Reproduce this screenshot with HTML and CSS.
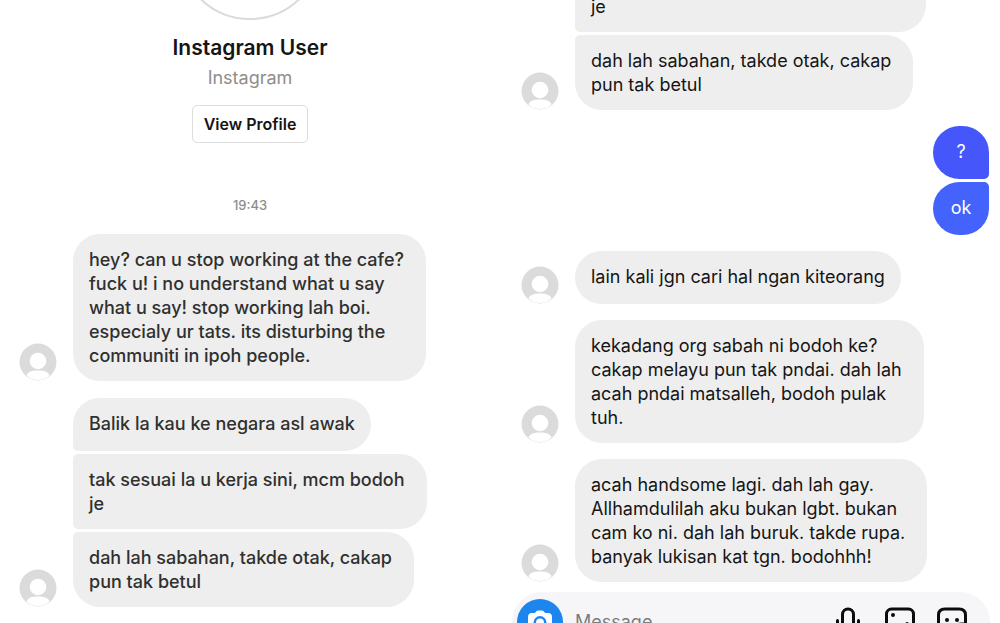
FILE: index.html
```html
<!DOCTYPE html>
<html lang="ms">
<head>
<meta charset="utf-8">
<title>Instagram User</title>
<link rel="stylesheet" href="styles.css">
</head>
<body>
<svg class="defs" aria-hidden="true">
  <symbol id="person" viewBox="0 0 38 38">
    <circle cx="19" cy="19" r="18.5" fill="#dbdbdb"/>
    <circle cx="19" cy="18" r="8.3" fill="#fff"/>
    <path d="M7.5 32.5C9 28.5 13 27.5 19 27.5S29 28.5 30.500 32.500C27.500 35.600 23.500 37 19 37S10.500 35.600 7.500 32.500Z" fill="#fff"/>
  </symbol>
</svg>
<main class="screens">
  <section class="screen left">
    <header class="profile">
      <div class="photo-crop"><div class="photo"></div></div>
      <h1 class="name">Instagram User</h1>
      <p class="source">Instagram</p>
      <button class="view" type="button">View Profile</button>
    </header>
    <time class="time">19:43</time>
    <div class="row">
      <svg class="avatar"><use href="#person"/></svg>
      <div class="stack"><p class="bubble multi">hey? can u stop working at the cafe?<br>fuck u! i no understand what u say<br>what u say! stop working lah boi.<br>especialy ur tats. its disturbing the<br>communiti in ipoh people.</p></div>
    </div>
    <div class="row">
      <svg class="avatar"><use href="#person"/></svg>
      <div class="stack">
        <p class="bubble first">Balik la kau ke negara asl awak</p>
        <p class="bubble multi middle">tak sesuai la u kerja sini, mcm bodoh<br>je</p>
        <p class="bubble multi last">dah lah sabahan, takde otak, cakap<br>pun tak betul</p>
      </div>
    </div>
  </section>

  <section class="screen right">
    <div class="scrolled">
      <p class="bubble multi middle">tak sesuai la u kerja sini, mcm bodoh<br>je</p>
    </div>
    <div class="row">
      <svg class="avatar"><use href="#person"/></svg>
      <div class="stack"><p class="bubble multi last">dah lah sabahan, takde otak, cakap<br>pun tak betul</p></div>
    </div>
    <div class="sent">
      <p class="bubble mine mine-first">?</p>
      <p class="bubble mine mine-last">ok</p>
    </div>
    <div class="row">
      <svg class="avatar"><use href="#person"/></svg>
      <div class="stack"><p class="bubble">lain kali jgn cari hal ngan kiteorang</p></div>
    </div>
    <div class="row">
      <svg class="avatar"><use href="#person"/></svg>
      <div class="stack"><p class="bubble multi">kekadang org sabah ni bodoh ke?<br>cakap melayu pun tak pndai. dah lah<br>acah pndai matsalleh, bodoh pulak<br>tuh.</p></div>
    </div>
    <div class="row">
      <svg class="avatar"><use href="#person"/></svg>
      <div class="stack"><p class="bubble multi">acah handsome lagi. dah lah gay.<br>Allhamdulilah aku bukan lgbt. bukan<br>cam ko ni. dah lah buruk. takde rupa.<br>banyak lukisan kat tgn. bodohhh!</p></div>
    </div>
    <form class="composer">
      <button class="camera" type="button" aria-label="Camera">
        <svg width="26" height="26" viewBox="0 0 26 26"><path d="M8 4Q9 1.500 11 1.500H15Q17 1.500 18 4H21Q25 4 25 8V19Q25 23 21 23H5Q1 23 1 19V8Q1 4 5 4Z" fill="#fff"/><circle cx="13" cy="13.500" r="5.200" fill="#fff" stroke="#1d86ee" stroke-width="2.500"/></svg>
      </button>
      <input class="message" type="text" placeholder="Message" aria-label="Message">
      <button class="tool" type="button" aria-label="Voice message">
        <svg width="30" height="30" viewBox="0 0 30 30"><rect x="9.500" y="2" width="11" height="19" rx="5.500"/><path d="M4.500 13.500V15C4.500 21 9 25 15 25S25.500 21 25.500 15V13.500M15 25V29"/></svg>
      </button>
      <button class="tool" type="button" aria-label="Photo">
        <svg width="30" height="30" viewBox="0 0 30 30"><rect x="1.500" y="2" width="27" height="26" rx="5"/><circle class="dot" cx="8" cy="8" r="2"/><path d="M2 26L9 20L14 25L22 16.500L28 21"/></svg>
      </button>
      <button class="tool" type="button" aria-label="Sticker">
        <svg width="30" height="30" viewBox="0 0 30 30"><path d="M8 2H22Q28.500 2 28.500 8V18L18 28H8Q1.500 28 1.500 22V8Q1.500 2 8 2ZM28 17H24Q18 17 18 23V28M8 18Q10 22 14 22"/><circle class="dot" cx="10" cy="13" r="2"/><circle class="dot" cx="20" cy="13" r="2"/></svg>
      </button>
    </form>
  </section>
</main>
</body>
</html>
```
FILE: styles.css
```css
* { box-sizing: border-box; }
body {
  margin: 0;
  background: #fff;
  color: #151515;
  font-family: Inter, "Liberation Sans", sans-serif;
  font-size: 18px;
  line-height: 24px;
}
h1, p { margin: 0; }
button { font: inherit; color: inherit; cursor: pointer; }
.defs { display: none; }
.screens {
  display: grid;
  grid-template-columns: 1fr 1fr;
  height: 100vh;
  overflow: hidden;
}
.screen {
  display: flex;
  flex-direction: column;
  min-width: 0;
}
.left { color: #303030; }
.left .bubble { font-weight: 500; }

.profile {
  display: flex;
  flex-direction: column;
  align-items: center;
}
.photo-crop {
  display: flex;
  align-items: flex-end;
  height: 20px;
  overflow: hidden;
}
.photo {
  flex: none;
  width: 144px;
  height: 144px;
  border: 2px solid #dadada;
  border-radius: 50%;
}
.name {
  margin-top: 16px;
  color: #151515;
  font-size: 21px;
  font-weight: 600;
}
.source { margin-top: 6px; color: #8e8e8e; }
.view {
  height: 38px;
  margin-top: 15px;
  padding: 0 11px;
  border: 1px solid #dedede;
  border-radius: 5px;
  background: #fff;
  color: #151515;
  font-size: 16px;
  font-weight: 600;
}
.time {
  margin: 50px 0 17px;
  color: #8e8e8e;
  font-size: 13px;
  font-weight: 500;
  text-align: center;
}

.row {
  display: flex;
  align-items: flex-end;
  gap: 16px;
}
.left .row { padding-left: 19px; margin-bottom: 17px; }
.right .row { padding-left: 21px; margin-bottom: 16px; }
.avatar { flex: none; width: 38px; height: 38px; }
.stack {
  display: flex;
  flex-direction: column;
  align-items: flex-start;
  gap: 3px;
}
.bubble {
  flex: none;
  min-height: 53px;
  padding: 14px 16px;
  border-radius: 27px;
  background: #eee;
  white-space: nowrap;
}
.multi { padding: 14px 22px 13px 16px; }
.first { border-bottom-left-radius: 5px; }
.middle { border-top-left-radius: 5px; border-bottom-left-radius: 5px; }
.last { border-top-left-radius: 5px; }

.scrolled {
  display: flex;
  align-items: flex-end;
  height: 32px;
  margin-bottom: 3px;
  padding-left: 75px;
  overflow: hidden;
}
.sent {
  display: flex;
  flex-direction: column;
  align-items: flex-end;
  gap: 3px;
  margin-bottom: 16px;
  padding-right: 11px;
}
.mine {
  min-width: 56px;
  background: #4557fb;
  color: #fff;
  text-align: center;
}
.mine-first { border-bottom-right-radius: 5px; }
.mine-last { border-top-right-radius: 5px; background: #4462fc; }

.composer {
  display: flex;
  flex: none;
  align-items: center;
  height: 60px;
  margin: -6px 10px 0 12px;
  padding: 0 23px 0 5px;
  gap: 22px;
  border-radius: 30px;
  background: #f6f6f8;
}
.camera {
  display: flex;
  flex: none;
  align-items: center;
  justify-content: center;
  width: 46px;
  height: 46px;
  padding: 0;
  border: 0;
  border-radius: 50%;
  background: #1d86ee;
}
.message {
  flex: 1;
  min-width: 0;
  padding: 0;
  border: 0;
  background: none;
  font: inherit;
  outline: 0;
}
.camera + .message { margin-left: -10px; }
.message::placeholder { color: #7c7c80; opacity: 1; }
.tool {
  display: flex;
  flex: none;
  padding: 0;
  border: 0;
  background: none;
}
.tool svg {
  fill: none;
  stroke: #0c0c0c;
  stroke-width: 3;
  stroke-linecap: round;
  stroke-linejoin: round;
}
.tool .dot { fill: #0c0c0c; stroke: none; }
```
